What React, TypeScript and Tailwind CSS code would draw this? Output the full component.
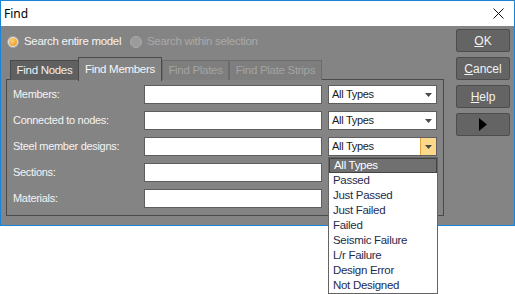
import React from 'react';

const labels = ['Members:', 'Connected to nodes:', 'Steel member designs:', 'Sections:', 'Materials:'];
const options = ['All Types', 'Passed', 'Just Passed', 'Just Failed', 'Failed', 'Seismic Failure', 'L/r Failure', 'Design Error', 'Not Designed'];

const Caret = () => (
  <svg width="7" height="4" viewBox="0 0 7 4"><path d="M0 0h7L3.5 4z" fill="#4a4a4a" /></svg>
);

const Combo = ({ open = false }: { open?: boolean }) => (
  <div className="w-[109px] h-[19px] bg-white border border-[#5e5e5e] flex items-stretch">
    <span className="flex-1 pl-[3px] leading-[17px] text-[#1a1a1a]">All Types</span>
    <span className={open ? 'w-[16px] flex items-center justify-center bg-[#fcd98a] border-l border-[#e2a53c]' : 'w-[16px] flex items-center justify-center'}>
      <Caret />
    </span>
  </div>
);

const Btn = ({ children }: { children: React.ReactNode }) => (
  <button className="w-[54px] h-[23px] rounded-[2px] bg-[#646464] border border-[#4d4d4d] text-[12px] tracking-normal text-[#f2f2f2] flex items-center justify-center">
    {children}
  </button>
);

export default function App() {
  return (
    <div className="w-[515px] h-[294px] bg-white relative text-[11px] tracking-[-0.3px] font-['Liberation_Sans',Arial,sans-serif] overflow-hidden">
      <div className="h-[226px] border border-[#1a84d8] flex flex-col">
        <div className="h-[25px] bg-white flex items-center justify-between pl-[3px] pr-[10px]">
          <span className="text-[12px] tracking-normal text-black font-['Noto_Sans',sans-serif]">Find</span>
          <svg width="11" height="11" viewBox="0 0 11 11">
            <path d="M0.5 0.5L10.5 10.5M10.5 0.5L0.5 10.5" stroke="#111" strokeWidth="1" />
          </svg>
        </div>
        <div className="flex-1 bg-[#848484] flex pl-[5px] pr-[4px]">
          <div className="w-[438px] flex flex-col pt-[8px]">
            <div className="h-[16px] flex items-center pl-[1px] text-[11.5px]">
              <span className="w-[12px] h-[12px] rounded-full bg-[#e8e8e8] border border-[#a0a0a0] flex items-center justify-center">
                <span className="w-[8px] h-[8px] rounded-full bg-[radial-gradient(circle_at_40%_35%,#ffd27a,#e8900e)]" />
              </span>
              <span className="ml-[5px] w-[106px] text-[#f4f4f4]">Search entire model</span>
              <span className="w-[12px] h-[12px] rounded-full bg-[#9c9c9c] border border-[#a9a9a9]" />
              <span className="ml-[5px] text-[#a9a9a9]">Search within selection</span>
            </div>
            <div className="mt-[7px] h-[23px] flex items-end pl-[4px] relative z-10 text-[11.5px]">
              <div className="w-[69px] h-[20px] bg-[#606060] border border-[#4a4a4a] border-b-0 text-[#f0f0f0] flex items-center justify-center">Find Nodes</div>
              <div className="w-[84px] -ml-[1px] h-[24px] bg-[#848484] border border-[#4a4a4a] border-b-0 text-[#f6f6f6] flex items-center justify-center -mb-[1px]">Find Members</div>
              <div className="w-[67px] h-[20px] bg-[#7e7e7e] border border-[#6c6c6c] border-b-0 text-[#a3a3a3] flex items-center justify-center">Find Plates</div>
              <div className="w-[93px] h-[20px] bg-[#7e7e7e] border border-[#6c6c6c] border-b-0 text-[#a3a3a3] flex items-center justify-center">Find Plate Strips</div>
            </div>
            <div className="-mt-[1px] h-[137px] border border-[#4a4a4a] pt-[5px] pl-[6px] flex flex-col gap-[7px]">
              {labels.map((l, i) => (
                <div key={l} className="h-[19px] flex items-center">
                  <span className="w-[131px] text-[#f4f4f4]">{l}</span>
                  <div className="w-[178px] h-[19px] bg-white border border-[#5e5e5e]" />
                  <div className="ml-[6px]">{i < 3 && <Combo open={i === 2} />}</div>
                </div>
              ))}
            </div>
          </div>
          <div className="ml-auto flex flex-col gap-[5px] pt-[3px]">
            <Btn><span><u>O</u>K</span></Btn>
            <Btn><span><u>C</u>ancel</span></Btn>
            <Btn><span><u>H</u>elp</span></Btn>
            <Btn>
              <svg width="8" height="13" viewBox="0 0 8 13"><path d="M0 0L8 6.5L0 13z" fill="#000" /></svg>
            </Btn>
          </div>
        </div>
      </div>
      <div className="absolute left-[328px] top-[157px] w-[110px] bg-white border border-[#646464] flex flex-col text-[11.5px]">
        {options.map((o, i) => (
          <div
            key={o}
            className={i === 0 ? 'h-[15px] leading-[13px] pl-[4px] bg-[#707070] border border-[#444] text-white' : 'h-[15px] leading-[15px] pl-[4px] text-[#1e2c4f]'}
          >
            {o}
          </div>
        ))}
      </div>
    </div>
  );
}
